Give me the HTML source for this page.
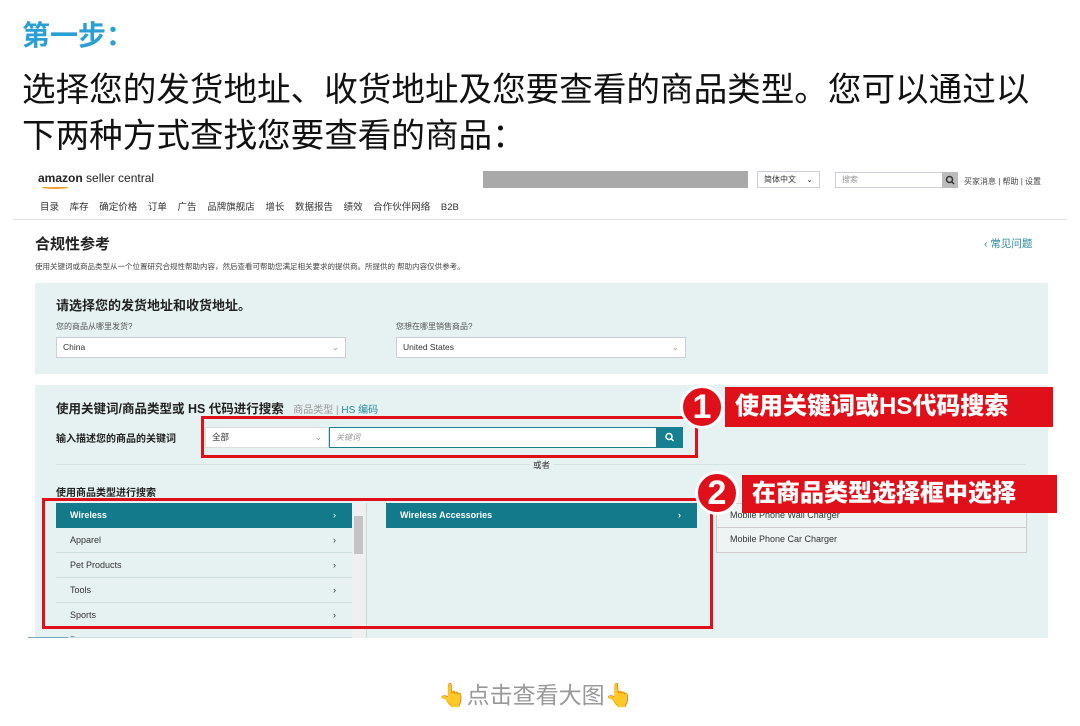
<!DOCTYPE html>
<html><head><meta charset="utf-8"><style>
*{margin:0;padding:0;box-sizing:border-box}
body{width:1080px;height:726px;background:#fff;position:relative;overflow:hidden;font-family:"Liberation Sans","Noto Sans CJK SC",sans-serif;color:#111}
.a{position:absolute;white-space:nowrap}
.sel{position:absolute;background:#fff;border:1px solid #ccd;font-size:9px;color:#333;padding-left:6px}
.row{position:absolute;left:56px;width:296px;height:25px;border-bottom:1px solid #cdd;font-size:9px;color:#333;line-height:24px;padding-left:14px}
.row b{position:absolute;right:16px;font-weight:normal}
.red{position:absolute;border:3px solid #e0101a}
.circ{position:absolute;width:44px;height:44px;border-radius:50%;background:#e0101a;border:3px solid #fff;color:#fff;font:bold 34px/38px "Liberation Sans",sans-serif;text-align:center}
.lab{position:absolute;background:#e0101a;color:#fff;font-weight:900;font-size:24px;line-height:40px;padding-left:10px}
</style></head><body>
<div class="a" style="left:22px;top:14px;font-size:28px;font-weight:bold;color:#2a9fd6">第一步：</div>
<div class="a" style="left:22px;top:68px;font-size:33.6px;line-height:46px;color:#111">选择您的发货地址、收货地址及您要查看的商品类型。您可以通过以<br>下两种方式查找您要查看的商品：</div>

<div class="a" style="left:38px;top:171px;font-size:12px;color:#222"><b>amazon</b> seller central</div>
<div class="a" style="left:42px;top:186px;width:26px;height:3px;border-bottom:2px solid #f0a030;border-radius:0 0 50% 50%"></div>
<div class="a" style="left:483px;top:171px;width:265px;height:17px;background:#a9a9a9"></div>
<div class="sel" style="left:757px;top:171px;width:63px;height:17px;font-size:8px;line-height:15px">简体中文 <span style="margin-left:8px">⌄</span></div>
<div class="sel" style="left:835px;top:172px;width:108px;height:16px;font-size:8px;line-height:14px;color:#999">搜索</div>
<div class="a" style="left:942px;top:172px;width:16px;height:16px;background:#bbb"><svg width="16" height="16"><circle cx="7.5" cy="7.5" r="3" fill="none" stroke="#333" stroke-width="1.5"/><path d="M9.5 9.5L12 12" stroke="#333" stroke-width="1.5"/></svg></div>
<div class="a" style="left:964px;top:176px;font-size:8px;color:#444">买家消息 | 帮助 | 设置</div>
<div class="a" style="left:40px;top:199px;font-size:9.5px;color:#333;word-spacing:8px">目录 库存 确定价格 订单 广告 品牌旗舰店 增长 数据报告 绩效 合作伙伴网络 B2B</div>
<div class="a" style="left:14px;top:219px;width:1052px;height:1px;background:#ddd"></div>
<div class="a" style="left:35px;top:233px;font-size:15px;font-weight:bold;color:#222">合规性参考</div>
<div class="a" style="left:984px;top:236px;font-size:10.5px;color:#2a8a9a">‹ 常见问题</div>
<div class="a" style="left:35px;top:261px;font-size:7.5px;color:#444">使用关键词或商品类型从一个位置研究合规性帮助内容，然后查看可帮助您满足相关要求的提供商。所提供的 帮助内容仅供参考。</div>

<div class="a" style="left:35px;top:283px;width:1013px;height:91px;background:#e6f1f1"></div>
<div class="a" style="left:56px;top:295px;font-size:13px;font-weight:bold;color:#222">请选择您的发货地址和收货地址。</div>
<div class="a" style="left:56px;top:321px;font-size:8px;color:#555">您的商品从哪里发货?</div>
<div class="a" style="left:396px;top:321px;font-size:8px;color:#555">您想在哪里销售商品?</div>
<div class="sel" style="left:56px;top:337px;width:290px;height:21px;line-height:19px;font-size:8.5px">China<span style="position:absolute;right:6px;color:#999">⌄</span></div>
<div class="sel" style="left:396px;top:337px;width:290px;height:21px;line-height:19px;font-size:8.5px">United States<span style="position:absolute;right:6px;color:#999">⌄</span></div>

<div class="a" style="left:35px;top:385px;width:1013px;height:253px;background:#e6f1f1"></div>
<div class="a" style="left:56px;top:398px;font-size:12.5px;font-weight:bold;color:#222">使用关键词/商品类型或 HS 代码进行搜索 <span style="font-size:10px;font-weight:normal;color:#999;margin-left:6px">商品类型 | <span style="color:#2a8a9a">HS 编码</span></span></div>
<div class="a" style="left:56px;top:430px;font-size:10px;font-weight:bold;color:#222">输入描述您的商品的关键词</div>
<div class="sel" style="left:205px;top:427px;width:124px;height:21px;line-height:19px;font-size:8.5px;border-color:#ddd">全部<span style="position:absolute;right:6px;color:#999">⌄</span></div>
<div class="sel" style="left:329px;top:427px;width:328px;height:21px;line-height:19px;font-size:8px;border:1px solid #1a7f8e;color:#999;font-style:italic">关键词</div>
<div class="a" style="left:657px;top:427px;width:26px;height:21px;background:#15808f"><svg width="26" height="21"><circle cx="12" cy="9.5" r="3" fill="none" stroke="#fff" stroke-width="1.5"/><path d="M14 11.5L16.5 14" stroke="#fff" stroke-width="1.5"/></svg></div>
<div class="a" style="left:56px;top:464px;width:970px;height:1px;background:#d6e2e2"></div>
<div class="a" style="left:530px;top:459px;font-size:8.5px;color:#333;background:#e6f1f1;padding:0 3px">或者</div>
<div class="a" style="left:56px;top:484px;font-size:10px;font-weight:bold;color:#222">使用商品类型进行搜索</div>

<div class="row" style="top:503px;background:#127a8a;color:#fff;font-weight:bold;border:none">Wireless<b>›</b></div>
<div class="row" style="top:528px">Apparel<b>›</b></div>
<div class="row" style="top:553px">Pet Products<b>›</b></div>
<div class="row" style="top:578px">Tools<b>›</b></div>
<div class="row" style="top:603px">Sports<b>›</b></div>
<div class="row" style="top:628px;height:10px;overflow:hidden">Bags<b>›</b></div>
<div class="a" style="left:352px;top:503px;width:13px;height:135px;background:#f0f0f0"></div>
<div class="a" style="left:354px;top:516px;width:9px;height:38px;background:#c4c4c4"></div>
<div class="a" style="left:366px;top:503px;width:1px;height:135px;background:#d0d8d8"></div>
<div class="a" style="left:386px;top:503px;width:311px;height:25px;background:#127a8a;color:#fff;font-size:9px;font-weight:bold;line-height:25px;padding-left:14px">Wireless Accessories<span style="position:absolute;right:16px">›</span></div>
<div class="a" style="left:716px;top:503px;width:311px;height:50px;border:1px solid #ccc;background:#eef4f4"></div>
<div class="a" style="left:716px;top:527px;width:311px;height:1px;background:#ccc"></div>
<div class="a" style="left:730px;top:510px;font-size:9px;color:#333">Mobile Phone Wall Charger</div>
<div class="a" style="left:730px;top:534px;font-size:9px;color:#333">Mobile Phone Car Charger</div>
<div class="a" style="left:28px;top:637px;width:40px;height:1px;background:#7ab"></div>

<div class="red" style="left:201px;top:416px;width:497px;height:42px"></div>
<div class="red" style="left:42px;top:498px;width:671px;height:131px"></div>
<div class="circ" style="left:680px;top:385px">1</div>
<div class="lab" style="left:725px;top:387px;width:328px">使用关键词或HS代码搜索</div>
<div class="circ" style="left:695px;top:471px">2</div>
<div class="lab" style="left:742px;top:475px;width:315px;line-height:38px">在商品类型选择框中选择</div>

<div class="a" style="left:438px;top:676px;font-size:23px;color:#999">👆点击查看大图👆</div>
</body></html>
